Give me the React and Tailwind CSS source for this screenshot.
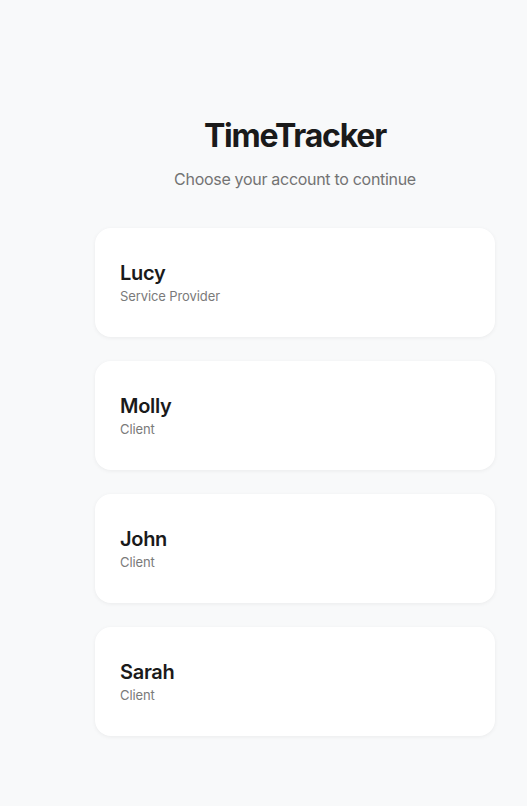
export default function App() {
  const accounts = [
    { name: "Lucy", role: "Service Provider" },
    { name: "Molly", role: "Client" },
    { name: "John", role: "Client" },
    { name: "Sarah", role: "Client" },
  ];
  return (
    <div className="min-h-[806px] bg-[#f8f9fa] font-['Inter',sans-serif]">
      <div className="ml-[95px] w-[400px] pt-[115px]">
        <h1 className="text-center text-[32px] leading-[42px] font-bold tracking-[-1.2px] text-[#1a1a1a]">TimeTracker</h1>
        <p className="mt-[12px] text-center text-[16px] leading-[20px] tracking-[-0.3px] text-[#737373]">Choose your account to continue</p>
        <div className="mt-[39px] flex flex-col gap-[24px]">
          {accounts.map((a) => (
            <button
              key={a.name}
              className="flex h-[109px] flex-col justify-center rounded-[16px] bg-white px-[25px] pb-[1px] text-left shadow-[0_1px_4px_rgba(0,0,0,0.06)]"
            >
              <div className="text-[20px] leading-[26px] font-semibold tracking-[-0.3px] text-[#1a1a1a]">{a.name}</div>
              <div className="mt-[2px] text-[13px] leading-[16px] tracking-[-0.1px] text-[#7a7a7a]">{a.role}</div>
            </button>
          ))}
        </div>
      </div>
    </div>
  );
}
